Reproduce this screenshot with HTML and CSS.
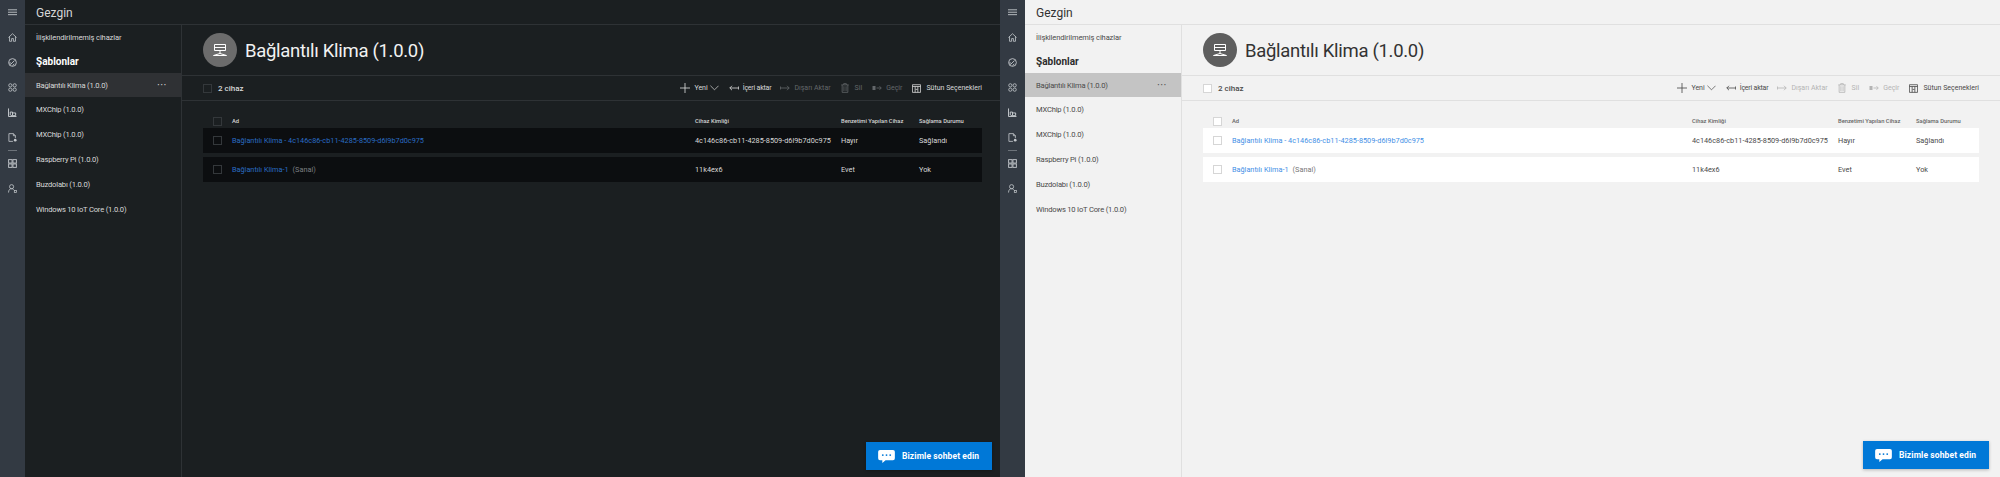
FILE: index.html
```html
<!DOCTYPE html>
<html lang="tr">
<head>
<meta charset="utf-8">
<title>Gezgin</title>
<link rel="stylesheet" href="styles.css">
</head>
<body>
<svg class="defs" aria-hidden="true">
  <symbol id="i-menu" viewBox="0 0 10 10"><path d="M0 2h10M0 4.700h10M0 7.400h10" fill="none" stroke="currentColor"/></symbol>
  <symbol id="i-home" viewBox="0 0 10 10"><path d="M.5 5 5 .8 9.500 5M1.700 4v5.200h2.300V6.200h2v3h2.300V4" fill="none" stroke="currentColor" stroke-width=".9"/></symbol>
  <symbol id="i-gauge" viewBox="0 0 10 10"><circle cx="5" cy="5" r="4.300" fill="none" stroke="currentColor"/><path d="M2.500 7.500 7.300 2.800M1.200 5.500h2M5 8.500l2-2" fill="none" stroke="currentColor"/></symbol>
  <symbol id="i-apps" viewBox="0 0 10 10"><g fill="none" stroke="currentColor" stroke-width=".9"><circle cx="2.600" cy="2.600" r="1.800"/><circle cx="7.400" cy="2.600" r="1.800"/><circle cx="2.600" cy="7.400" r="1.800"/><circle cx="7.400" cy="7.400" r="1.800"/></g></symbol>
  <symbol id="i-chart" viewBox="0 0 10 10"><path d="M.6.500v9h8.800M2.500 8V4.500M2.500 4.500h2.500v3.500M5 5.500h3.500V8.500H3" fill="none" stroke="currentColor" stroke-width="1.100"/></symbol>
  <symbol id="i-doc" viewBox="0 0 10 10"><path d="M5.500 9.300H1V.7h5l2.200 2.300v2.500M6 .7V3h2.200" fill="none" stroke="currentColor" stroke-width=".9"/><circle cx="8" cy="8" r="1.500" fill="currentColor"/></symbol>
  <symbol id="i-grid" viewBox="0 0 10 10"><g fill="none" stroke="currentColor"><rect x=".7" y=".7" width="3.800" height="3.800"/><rect x="5.500" y=".7" width="3.800" height="3.800"/><rect x=".7" y="5.500" width="3.800" height="3.800"/><rect x="5.500" y="5.500" width="3.800" height="3.800"/></g></symbol>
  <symbol id="i-user" viewBox="0 0 10 10"><circle cx="4" cy="3" r="2.300" fill="none" stroke="currentColor" stroke-width=".9"/><path d="M.6 9.500c0-3 1.500-4.300 3.400-4.300 1 0 1.800.4 2.400 1.100" fill="none" stroke="currentColor" stroke-width=".9"/><rect x="7" y="7.300" width="2.400" height="2.200" fill="none" stroke="currentColor" stroke-width=".8"/></symbol>
  <symbol id="i-device" viewBox="0 0 14 14"><path d="M1.500 1.500h11v6h-11zM1.500 4.500h11M7 7.500v3M.5 12.500l6.500-2 6.500 2M.5 12.500h13" fill="none" stroke="currentColor"/></symbol>
  <symbol id="i-plus" viewBox="0 0 12 12"><path d="M6 0v12M0 6h12" fill="none" stroke="currentColor"/></symbol>
  <symbol id="i-chev" viewBox="0 0 10 6"><path d="M.5.500 5 5 9.500.5" fill="none" stroke="currentColor" stroke-width=".8"/></symbol>
  <symbol id="i-import" viewBox="0 0 10 6"><path d="M3 .8.800 3 3 5.200M.8 3h8.500M9.500 1.500v3" fill="none" stroke="currentColor" stroke-width=".8"/></symbol>
  <symbol id="i-export" viewBox="0 0 10 6"><path d="M7 .8 9.200 3 7 5.200M.7 3h8.500M.5 1.500v3" fill="none" stroke="currentColor" stroke-width=".8"/></symbol>
  <symbol id="i-trash" viewBox="0 0 9 11"><path d="M.3 2h8.400M3 2V.6h3V2M1.300 2v8.400h6.400V2M3.300 3.500v5.500M5.700 3.500v5.500" fill="none" stroke="currentColor" stroke-width=".9"/></symbol>
  <symbol id="i-move" viewBox="0 0 10 6"><path d="M.5 1h3v4h-3z" fill="currentColor"/><path d="M4.500 3h4.500M7.500 1.200 9.300 3 7.500 4.800" fill="none" stroke="currentColor" stroke-width=".8"/></symbol>
  <symbol id="i-columns" viewBox="0 0 10 10"><path d="M.5.800h9v8.500h-9zM.5 2.800h9M3.500 2.800v6.500M6.500 2.800v6.500M4 6h2.200" fill="none" stroke="currentColor" stroke-width=".9"/></symbol>
  <symbol id="i-chat" viewBox="0 0 18 14"><path d="M2 0h14a2 2 0 0 1 2 2v7a2 2 0 0 1-2 2H8l-3.500 3v-3H2a2 2 0 0 1-2-2V2a2 2 0 0 1 2-2z" fill="currentColor"/><g class="chat-dots"><circle cx="5" cy="5.500" r="1"/><circle cx="9" cy="5.500" r="1"/><circle cx="13" cy="5.500" r="1"/></g></symbol>
</svg>

<div class="page">
  <section class="panel dark">
    <nav class="rail">
      <svg class="rail-icon"><use href="#i-menu"/></svg>
      <svg class="rail-icon"><use href="#i-home"/></svg>
      <svg class="rail-icon"><use href="#i-gauge"/></svg>
      <svg class="rail-icon"><use href="#i-apps"/></svg>
      <svg class="rail-icon"><use href="#i-chart"/></svg>
      <svg class="rail-icon"><use href="#i-doc"/></svg>
      <span class="rail-sep"></span>
      <svg class="rail-icon"><use href="#i-grid"/></svg>
      <svg class="rail-icon"><use href="#i-user"/></svg>
    </nav>
    <div class="workspace">
      <header class="topbar">Gezgin</header>
      <div class="split">
        <aside class="sidebar">
          <div class="side-link">İlişkilendirilmemiş cihazlar</div>
          <div class="side-title">Şablonlar</div>
          <div class="side-item selected"><span>Bağlantılı Klima (1.0.0)</span><span class="more">···</span></div>
          <div class="side-item">MXChip (1.0.0)</div>
          <div class="side-item">MXChip (1.0.0)</div>
          <div class="side-item">Raspberry Pi (1.0.0)</div>
          <div class="side-item">Buzdolabı (1.0.0)</div>
          <div class="side-item">Windows 10 IoT Core (1.0.0)</div>
        </aside>
        <main class="main">
          <div class="title-band">
            <span class="avatar"><svg class="avatar-icon"><use href="#i-device"/></svg></span>
            <h1 class="title">Bağlantılı Klima (1.0.0)</h1>
          </div>
          <div class="toolbar">
            <span class="check"></span>
            <span class="count">2 cihaz</span>
            <div class="actions">
              <span class="action"><svg class="ic-plus"><use href="#i-plus"/></svg>Yeni<svg class="ic-chev"><use href="#i-chev"/></svg></span>
              <span class="action tight"><svg class="ic-arrow"><use href="#i-import"/></svg>İçeri aktar</span>
              <span class="action off"><svg class="ic-arrow"><use href="#i-export"/></svg>Dışarı Aktar</span>
              <span class="action off"><svg class="ic-trash"><use href="#i-trash"/></svg>Sil</span>
              <span class="action off"><svg class="ic-arrow"><use href="#i-move"/></svg>Geçir</span>
              <span class="action"><svg class="ic-columns"><use href="#i-columns"/></svg>Sütun Seçenekleri</span>
            </div>
          </div>
          <div class="table">
            <div class="thead">
              <div class="name-cell"><span class="check"></span>Ad</div>
              <div>Cihaz Kimliği</div>
              <div>Benzetimi Yapılan Cihaz</div>
              <div>Sağlama Durumu</div>
            </div>
            <div class="trow">
              <div class="name-cell"><span class="check"></span><a class="link">Bağlantılı Klima - 4c146c86-cb11-4285-8509-d6l9b7d0c975</a></div>
              <div>4c146c86-cb11-4285-8509-d6l9b7d0c975</div>
              <div>Hayır</div>
              <div>Sağlandı</div>
            </div>
            <div class="trow">
              <div class="name-cell"><span class="check"></span><a class="link">Bağlantılı Klima-1</a><span class="muted">(Sanal)</span></div>
              <div>11k4ex6</div>
              <div>Evet</div>
              <div>Yok</div>
            </div>
          </div>
        </main>
      </div>
    </div>
    <button class="chat"><svg class="chat-icon"><use href="#i-chat"/></svg>Bizimle sohbet edin</button>
  </section>

  <section class="panel light">
    <nav class="rail">
      <svg class="rail-icon"><use href="#i-menu"/></svg>
      <svg class="rail-icon"><use href="#i-home"/></svg>
      <svg class="rail-icon"><use href="#i-gauge"/></svg>
      <svg class="rail-icon"><use href="#i-apps"/></svg>
      <svg class="rail-icon"><use href="#i-chart"/></svg>
      <svg class="rail-icon"><use href="#i-doc"/></svg>
      <span class="rail-sep"></span>
      <svg class="rail-icon"><use href="#i-grid"/></svg>
      <svg class="rail-icon"><use href="#i-user"/></svg>
    </nav>
    <div class="workspace">
      <header class="topbar">Gezgin</header>
      <div class="split">
        <aside class="sidebar">
          <div class="side-link">İlişkilendirilmemiş cihazlar</div>
          <div class="side-title">Şablonlar</div>
          <div class="side-item selected"><span>Bağlantılı Klima (1.0.0)</span><span class="more">···</span></div>
          <div class="side-item">MXChip (1.0.0)</div>
          <div class="side-item">MXChip (1.0.0)</div>
          <div class="side-item">Raspberry Pi (1.0.0)</div>
          <div class="side-item">Buzdolabı (1.0.0)</div>
          <div class="side-item">Windows 10 IoT Core (1.0.0)</div>
        </aside>
        <main class="main">
          <div class="title-band">
            <span class="avatar"><svg class="avatar-icon"><use href="#i-device"/></svg></span>
            <h1 class="title">Bağlantılı Klima (1.0.0)</h1>
          </div>
          <div class="toolbar">
            <span class="check"></span>
            <span class="count">2 cihaz</span>
            <div class="actions">
              <span class="action"><svg class="ic-plus"><use href="#i-plus"/></svg>Yeni<svg class="ic-chev"><use href="#i-chev"/></svg></span>
              <span class="action tight"><svg class="ic-arrow"><use href="#i-import"/></svg>İçeri aktar</span>
              <span class="action off"><svg class="ic-arrow"><use href="#i-export"/></svg>Dışarı Aktar</span>
              <span class="action off"><svg class="ic-trash"><use href="#i-trash"/></svg>Sil</span>
              <span class="action off"><svg class="ic-arrow"><use href="#i-move"/></svg>Geçir</span>
              <span class="action"><svg class="ic-columns"><use href="#i-columns"/></svg>Sütun Seçenekleri</span>
            </div>
          </div>
          <div class="table">
            <div class="thead">
              <div class="name-cell"><span class="check"></span>Ad</div>
              <div>Cihaz Kimliği</div>
              <div>Benzetimi Yapılan Cihaz</div>
              <div>Sağlama Durumu</div>
            </div>
            <div class="trow">
              <div class="name-cell"><span class="check"></span><a class="link">Bağlantılı Klima - 4c146c86-cb11-4285-8509-d6l9b7d0c975</a></div>
              <div>4c146c86-cb11-4285-8509-d6l9b7d0c975</div>
              <div>Hayır</div>
              <div>Sağlandı</div>
            </div>
            <div class="trow">
              <div class="name-cell"><span class="check"></span><a class="link">Bağlantılı Klima-1</a><span class="muted">(Sanal)</span></div>
              <div>11k4ex6</div>
              <div>Evet</div>
              <div>Yok</div>
            </div>
          </div>
        </main>
      </div>
    </div>
    <button class="chat"><svg class="chat-icon"><use href="#i-chat"/></svg>Bizimle sohbet edin</button>
  </section>
</div>
</body>
</html>
```

FILE: styles.css
```css
* { box-sizing: border-box; }
html, body { margin: 0; height: 100%; overflow: hidden; }
body { font-family: Roboto, "Open Sans", sans-serif; font-size: 7.500px; white-space: nowrap; }
.defs { display: none; }
.page { display: flex; height: 477px; }

.panel { position: relative; display: flex; width: 1000px; height: 477px; overflow: hidden; background: var(--bg); color: var(--text); }
.dark {
  --bg: #1b1f21; --line: #2e3235; --text: #d9d9d9; --strong: #fff; --title: #f2f2f2; --topbar: #d6d6d6;
  --sel: #2f3134; --row: #0c0e10; --check: #34383b; --checkbg: transparent; --link: #2a6cc4; --muted: #7c7f82;
  --off: #63676a; --avatar: #6c6c6c; --head: #d4d4d4;
  --pad-right: 18px; --chat-right: 8px; --chat-bottom: 7px;
}
.light {
  --bg: #f2f2f2; --line: #e0e0e0; --text: #4a4a4a; --strong: #2b2b2b; --title: #333; --topbar: #333;
  --sel: #c4c4c4; --row: #fff; --check: #d6d6d6; --checkbg: #fff; --link: #3f8fe6; --muted: #777;
  --off: #b4b4b4; --avatar: #5e5e5e; --head: #666;
  --pad-right: 21px; --chat-right: 11px; --chat-bottom: 8px;
}

.rail { flex: none; width: 25px; background: #333a43; color: #c4c8cc; display: flex; flex-direction: column; align-items: center; padding-top: 8px; }
.rail-icon { width: 9px; height: 9px; margin-bottom: 16px; flex: none; }
.rail-sep { width: 9px; height: 1px; background: #6d737a; margin: -8.5px 0 8.5px; flex: none; }

.workspace { flex: 1; min-width: 0; display: flex; flex-direction: column; }
.topbar { height: 25px; flex: none; padding: 2px 0 0 11px; font-size: 12px; line-height: 22px; color: var(--topbar); border-bottom: 1px solid var(--line); }
.split { flex: 1; display: flex; min-height: 0; }

.sidebar { flex: none; width: 157px; border-right: 1px solid var(--line); }
.side-link { height: 26px; padding: 0 0 0 11px; line-height: 26px; font-size: 7.500px; letter-spacing: -.1px; color: var(--text); }
.side-title { height: 22px; padding-left: 11px; line-height: 22px; font-size: 10px; font-weight: 700; color: var(--strong); }
.side-item { height: 25px; padding: 0 14px 0 11px; display: flex; align-items: center; justify-content: space-between; font-size: 7.600px; letter-spacing: -.2px; color: var(--text); }
.selected { background: var(--sel); height: 24px; }
.more { font-size: 11px; letter-spacing: .5px; }

.main { flex: 1; min-width: 0; padding: 0 var(--pad-right) 0 0; }
.title-band { height: 51px; margin-right: calc(0px - var(--pad-right)); padding-left: 21px; display: flex; align-items: center; border-bottom: 1px solid var(--line); }
.avatar { width: 34px; height: 34px; border-radius: 50%; background: var(--avatar); display: flex; align-items: center; justify-content: center; flex: none; }
.avatar-icon { width: 14px; height: 14px; color: #fff; }
.title { margin: 2px 0 0 8px; font-size: 18.500px; letter-spacing: -.3px; font-weight: 400; color: var(--title); line-height: 30px; }

.toolbar { height: 25px; margin-right: calc(0px - var(--pad-right)); padding: 0 var(--pad-right) 0 21px; display: flex; align-items: center; border-bottom: 1px solid var(--line); }
.check { width: 9px; height: 9px; flex: none; border: 1px solid var(--check); background: var(--checkbg); }
.count { margin-left: 6px; font-size: 8px; font-weight: 500; color: var(--text); }
.actions { margin-left: auto; display: flex; align-items: center; gap: 10px; }
.action { display: flex; align-items: center; gap: 4px; font-size: 7px; color: var(--text); }
.tight { letter-spacing: -.2px; margin-right: -1px; }
.off { color: var(--off); }
.ic-plus { width: 10px; height: 10px; }
.ic-chev { width: 9px; height: 6px; margin-left: -2px; }
.ic-arrow { width: 10px; height: 6px; }
.ic-trash { width: 8px; height: 10px; margin-right: 2px; }
.ic-columns { width: 9px; height: 9px; margin-right: 1px; }

.table { padding: 13px 0 0 21px; }
.thead, .trow { display: grid; grid-template-columns: 1fr 146px 78px 63px; align-items: center; }
.thead { height: 14px; font-size: 5.800px; font-weight: 500; color: var(--head); }
.trow { height: 25px; margin-bottom: 4px; background: var(--row); font-size: 7.300px; color: var(--text); }
.name-cell { display: flex; align-items: center; padding-left: 10px; }
.name-cell .check { margin-right: 10px; }
.link { color: var(--link); font-size: 7.300px; }
.muted { margin-left: 4px; color: var(--muted); }

.chat { position: absolute; right: var(--chat-right); bottom: var(--chat-bottom); width: 126px; height: 28px; border: 0; padding: 0 0 0 12px; display: flex; align-items: center; gap: 7px; background: #0078d7; color: #fff; font-family: inherit; font-size: 8.500px; font-weight: 700; letter-spacing: .1px; box-shadow: 0 1px 3px rgba(0, 0, 0, .25); }
.chat-icon { width: 17px; height: 13px; color: #fff; flex: none; }
.chat-dots { fill: #0078d7; }
```
